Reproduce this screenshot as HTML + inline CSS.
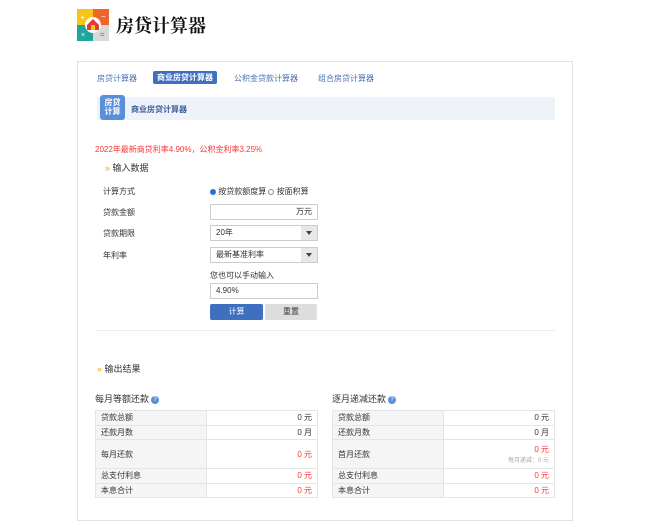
<!DOCTYPE html>
<html><head><meta charset="utf-8"><style>
*{margin:0;padding:0;box-sizing:border-box}
body{width:650px;height:500px;overflow:hidden;background:#fff;font-family:"Liberation Sans","Noto Sans CJK SC",sans-serif;font-size:8px;color:#333;position:relative}
.a{position:absolute}
.box{position:absolute;left:77px;top:61px;width:496px;height:460px;border:1px solid #dde3ea}
.inp{position:absolute;left:210px;width:108px;height:16px;border:1px solid #ccc;background:#fff;font-size:8px;line-height:14px;padding:0 5px}
.sel{background:#fff}
.sel:after{content:"";position:absolute;right:0;top:0;width:16px;height:14px;background:#e8e8e8}
.sel i{position:absolute;right:5px;top:5px;border:3px solid transparent;border-top:4px solid #444;z-index:2}
table{position:absolute;border-collapse:collapse;font-size:8px;width:223px}
td{border:1px solid #e5e5e5;height:14.5px;padding:0 5px}
td:first-child{background:#f5f5f5;width:111px}
td:last-child{text-align:right}
.r{color:#f33}
.q{display:inline-block;width:8px;height:8px;border-radius:50%;background:#5b8fd9;color:#fff;font-size:6px;text-align:center;line-height:8px;vertical-align:1px;margin-left:2px}
</style></head><body>
<svg class="a" style="left:77px;top:9px" width="32" height="32" viewBox="0 0 32 32">
<rect x="0" y="0" width="16" height="16" fill="#f5c518"/><rect x="16" y="0" width="16" height="16" fill="#f0652a"/>
<rect x="0" y="16" width="16" height="16" fill="#1fa69a"/><rect x="16" y="16" width="16" height="16" fill="#d9d9d9"/>
<circle cx="16" cy="16" r="8" fill="#fff"/><path d="M10 16 L16 10 L22 16 V21 H10Z" fill="#e53935"/><rect x="14" y="16" width="4" height="5" fill="#f5c518"/>
<text x="3" y="11" font-size="8" fill="#fff">+</text><text x="24" y="10" font-size="8" fill="#fff">−</text><text x="4" y="28" font-size="7" fill="#fff">×</text><text x="23" y="28" font-size="8" fill="#666">=</text>
</svg>
<div class="a" style="left:116px;top:12px;font-size:18px;font-family:'Noto Serif CJK SC',serif;color:#111;font-weight:bold">房贷计算器</div>
<div class="box"></div>
<div class="a" style="left:97px;top:73px;color:#4a6fb0">房贷计算器</div>
<div class="a" style="left:153px;top:71px;background:#3f6fbf;color:#fff;padding:1px 4px;border-radius:2px;font-weight:bold">商业房贷计算器</div>
<div class="a" style="left:234px;top:73px;color:#4a6fb0">公积金贷款计算器</div>
<div class="a" style="left:318px;top:73px;color:#4a6fb0">组合房贷计算器</div>
<div class="a" style="left:97px;top:97px;width:458px;height:23px;background:#eef3fa"></div>
<div class="a" style="left:100px;top:95px;width:25px;height:25px;background:#5b8fd9;border-radius:3px;color:#fff;font-weight:bold;font-size:8px;line-height:9px;text-align:center;padding-top:3px">房贷<br>计算</div>
<div class="a" style="left:131px;top:104px;color:#3c5f99;font-weight:bold">商业房贷计算器</div>
<div class="a r" style="left:95px;top:144px">2022年最新商贷利率4.90%，公积金利率3.25%</div>
<div class="a" style="left:105px;top:161px;font-size:9px"><span style="color:#f0a020">»</span> 输入数据</div>
<div class="a" style="left:103px;top:186px">计算方式</div>
<div class="a" style="left:103px;top:207px">贷款金额</div>
<div class="a" style="left:103px;top:228px">贷款期限</div>
<div class="a" style="left:103px;top:250px">年利率</div>
<div class="a" style="left:210px;top:186px"><span style="display:inline-block;width:6px;height:6px;border-radius:50%;background:#2a6fdb;vertical-align:-1px"></span> 按贷款额度算 <span style="display:inline-block;width:6px;height:6px;border-radius:50%;border:1px solid #888;vertical-align:-1px"></span> 按面积算</div>
<div class="inp" style="top:204px;text-align:right">万元</div>
<div class="inp sel" style="top:225px">20年<i></i></div>
<div class="inp sel" style="top:247px">最新基准利率<i></i></div>
<div class="a" style="left:210px;top:270px">您也可以手动输入</div>
<div class="inp" style="top:283px">4.90%</div>
<div class="a" style="left:210px;top:304px;width:53px;height:16px;background:#3f6fbf;color:#fff;text-align:center;line-height:16px;border-radius:2px">计算</div>
<div class="a" style="left:265px;top:304px;width:52px;height:16px;background:#ddd;text-align:center;line-height:16px;border-radius:2px">重置</div>
<div class="a" style="left:95px;top:330px;width:460px;height:1px;background:#eee"></div>
<div class="a" style="left:97px;top:362px;font-size:9px"><span style="color:#f0a020">»</span> 输出结果</div>
<div class="a" style="left:95px;top:392px;font-size:9px">每月等额还款<span class="q">?</span></div>
<div class="a" style="left:332px;top:392px;font-size:9px">逐月递减还款<span class="q">?</span></div>
<table style="left:95px;top:410px">
<tr><td>贷款总额</td><td>0 元</td></tr>
<tr><td>还款月数</td><td>0 月</td></tr>
<tr><td style="height:29px">每月还款</td><td class="r">0 元</td></tr>
<tr><td>总支付利息</td><td class="r">0 元</td></tr>
<tr><td>本息合计</td><td class="r">0 元</td></tr>
</table>
<table style="left:332px;top:410px">
<tr><td>贷款总额</td><td>0 元</td></tr>
<tr><td>还款月数</td><td>0 月</td></tr>
<tr><td style="height:29px">首月还款</td><td><span class="r">0 元</span><br><span style="font-size:6px;color:#aaa">每月递减：0 元</span></td></tr>
<tr><td>总支付利息</td><td class="r">0 元</td></tr>
<tr><td>本息合计</td><td class="r">0 元</td></tr>
</table>
</body></html>
